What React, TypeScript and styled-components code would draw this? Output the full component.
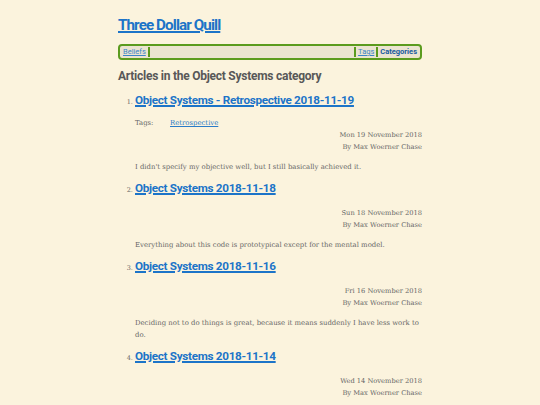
import styled, { createGlobalStyle } from "styled-components";

const GlobalStyle = createGlobalStyle`
  html, body {
    margin: 0;
    padding: 0;
    background: #fbf3dd;
  }
  body {
    font-family: "DejaVu Serif", "Liberation Serif", serif;
    color: #666;
  }
`;

const Page = styled.div`
  width: 304px;
  margin: 0 auto;
  padding-top: 14px;
`;

const SiteTitle = styled.h1`
  margin: 0;
  font-family: Roboto, "Noto Sans", sans-serif;
  font-size: 15.2px;
  letter-spacing: -0.9px;
  font-weight: 700;
  line-height: 22px;
  a {
    color: #1c74c8;
    text-decoration: underline;
    text-decoration-thickness: 2px;
  }
`;

const NavBar = styled.nav`
  margin-top: 8px;
  display: flex;
  align-items: center;
  height: 12px;
  padding: 0 1px;
  border: 2px solid #5b9b1e;
  border-radius: 4px;
  background: #ebe4d0;
  font-family: Roboto, "Noto Sans", sans-serif;
  font-size: 7.5px;
`;

const NavLink = styled.a<{ $current?: boolean; $divider: "left" | "right" }>`
  display: inline-block;
  padding: 0 2px;
  line-height: 10px;
  color: ${(p) => (p.$current ? "#17599f" : "#3a84c8")};
  font-weight: ${(p) => (p.$current ? 700 : 400)};
  text-decoration: ${(p) => (p.$current ? "none" : "underline")};
  border-${(p) => p.$divider}: 2px solid #5b9b1e;
`;

const Spacer = styled.div`
  flex: 1;
`;

const CategoryHeading = styled.h2`
  margin: 8px 0 0;
  font-family: Roboto, "Noto Sans", sans-serif;
  font-size: 12px;
  letter-spacing: -0.25px;
  font-weight: 700;
  line-height: 16px;
  color: #585858;
`;

const ArticleList = styled.ol`
  margin: 7px 0 0;
  padding-left: 17px;
  font-size: 7px;
  color: #666;
`;

const Article = styled.li`
  margin-bottom: 6px;
  &::marker {
    font-family: "DejaVu Serif", serif;
    font-size: 6.5px;
  }
`;

const ArticleTitle = styled.h3`
  display: inline;
  margin: 0;
  font-family: Roboto, "Noto Sans", sans-serif;
  font-size: 11.7px;
  letter-spacing: -0.3px;
  font-weight: 700;
  line-height: 18px;
  a {
    color: #1c74c8;
    text-decoration: underline;
    text-decoration-thickness: 1.5px;
  }
`;

const TagsRow = styled.div`
  display: flex;
  margin-top: 8px;
  font-size: 6.9px;
  line-height: 12px;
  color: #666;
  span {
    width: 35px;
  }
  a {
    color: #2a7bc8;
    text-decoration: underline;
  }
`;

const Meta = styled.div<{ $gap: number }>`
  margin-top: ${(p) => p.$gap}px;
  text-align: right;
  font-size: 6.7px;
  line-height: 12px;
  color: #666;
`;

const Summary = styled.p`
  margin: 8px 0 0;
  font-size: 6.9px;
  line-height: 12px;
  color: #666;
`;

type Entry = {
  title: string;
  tags?: string[];
  date: string;
  summary: string;
};

const entries: Entry[] = [
  {
    title: "Object Systems - Retrospective 2018-11-19",
    tags: ["Retrospective"],
    date: "Mon 19 November 2018",
    summary: "I didn't specify my objective well, but I still basically achieved it.",
  },
  {
    title: "Object Systems 2018-11-18",
    date: "Sun 18 November 2018",
    summary: "Everything about this code is prototypical except for the mental model.",
  },
  {
    title: "Object Systems 2018-11-16",
    date: "Fri 16 November 2018",
    summary:
      "Deciding not to do things is great, because it means suddenly I have less work to do.",
  },
  {
    title: "Object Systems 2018-11-14",
    date: "Wed 14 November 2018",
    summary: "",
  },
];

export default function App() {
  return (
    <>
      <GlobalStyle />
      <Page>
        <SiteTitle>
          <a href="#">Three Dollar Quill</a>
        </SiteTitle>
        <NavBar>
          <NavLink href="#" $divider="right">
            Beliefs
          </NavLink>
          <Spacer />
          <NavLink href="#" $divider="left">
            Tags
          </NavLink>
          <NavLink href="#" $divider="left" $current>
            Categories
          </NavLink>
        </NavBar>
        <CategoryHeading>Articles in the Object Systems category</CategoryHeading>
        <ArticleList>
          {entries.map((e) => (
            <Article key={e.title}>
              <ArticleTitle>
                <a href="#">{e.title}</a>
              </ArticleTitle>
              {e.tags && (
                <TagsRow>
                  <span>Tags:</span>
                  {e.tags.map((t) => (
                    <a href="#" key={t}>
                      {t}
                    </a>
                  ))}
                </TagsRow>
              )}
              <Meta $gap={e.tags ? 0 : 10}>
                {e.date}
                <br />
                By Max Woerner Chase
              </Meta>
              {e.summary && <Summary>{e.summary}</Summary>}
            </Article>
          ))}
        </ArticleList>
      </Page>
    </>
  );
}
